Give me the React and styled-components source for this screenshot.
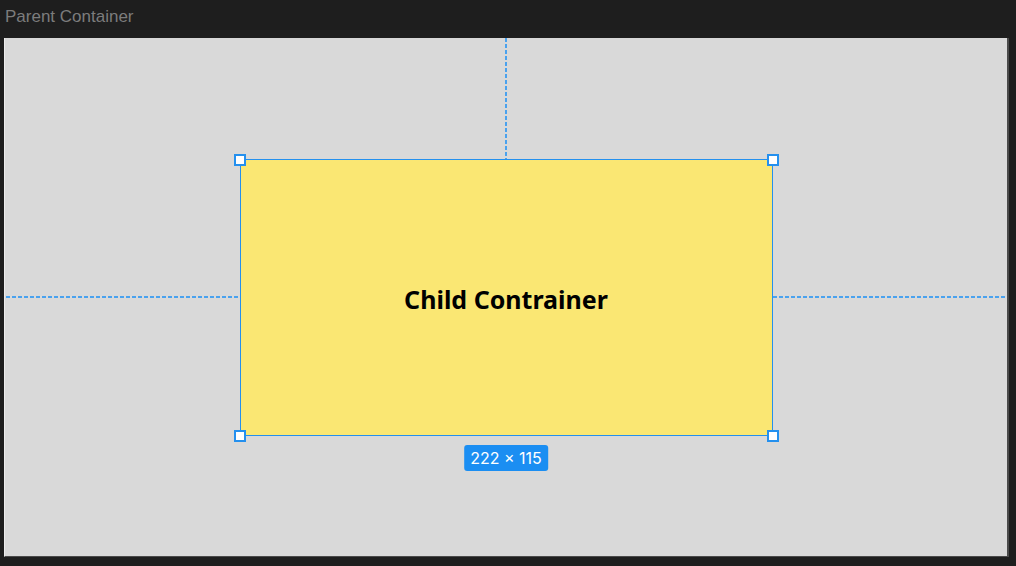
import React from "react";
import styled, { createGlobalStyle } from "styled-components";

const GlobalStyle = createGlobalStyle`
  html, body {
    margin: 0;
    padding: 0;
    background: #1e1e1e;
  }
`;

const Frame = styled.div`
  width: 1016px;
  height: 566px;
  display: flex;
  flex-direction: column;
  box-sizing: border-box;
  padding: 0 7px 9px 4px;
`;

const Title = styled.div`
  height: 38px;
  padding: 5px 0 0 1px;
  box-sizing: border-box;
  font-family: "Liberation Sans", Arial, sans-serif;
  font-size: 17px;
  color: #7c7c7c;
  line-height: 24px;
`;

const Canvas = styled.div`
  flex: 1;
  position: relative;
  background: #d9d9d9;
  border-left: 1px solid #ececec;
  border-right: 2px solid #4a4a4a;
  border-bottom: 1px solid #4a4a4a;
  display: flex;
  align-items: center;
  justify-content: center;
`;

const blue = "#2490ee";
const guideBlue = "#4aa2ee";

const Child = styled.div`
  position: relative;
  width: 533px;
  height: 277px;
  box-sizing: border-box;
  background: #fae773;
  border: 1px solid ${blue};
  display: flex;
  align-items: center;
  justify-content: center;
  padding-top: 3px;
  font-family: "Noto Sans", "Open Sans", sans-serif;
  font-weight: 700;
  font-size: 25px;
  color: #000;
`;

const Guide = styled.div`
  position: absolute;
  ${(p) =>
    p.$vertical
      ? `
    width: 2px;
    height: 121px;
    left: 264px;
    bottom: 100%;
    margin-bottom: 1px;
    background-image: linear-gradient(to bottom, ${guideBlue} 4px, transparent 4px);
    background-size: 2px 6px;
    background-repeat: repeat-y;
  `
      : `
    height: 2px;
    width: 234px;
    top: 136px;
    background-image: linear-gradient(to right, ${guideBlue} 4px, transparent 4px);
    background-size: 6px 2px;
    background-repeat: repeat-x;
    ${p.$side}: 100%;
    margin-${p.$side}: 1px;
  `}
`;

const Handle = styled.span`
  position: absolute;
  width: 12px;
  height: 12px;
  box-sizing: border-box;
  background: #fff;
  border: 2px solid ${blue};
  ${(p) => (p.$top ? "top: -6px;" : "bottom: -7px;")}
  ${(p) => (p.$left ? "left: -7px;" : "right: -7px;")}
`;

const SizeBadge = styled.div`
  position: absolute;
  top: calc(100% + 10px);
  left: 50%;
  transform: translateX(-50%);
  height: 26px;
  padding: 0 6px;
  border-radius: 3px;
  background: #1b8ef2;
  color: #fff;
  font-family: "Inter", "Liberation Sans", sans-serif;
  font-weight: 400;
  font-size: 16px;
  line-height: 26px;
  white-space: nowrap;
`;

export default function App() {
  return (
    <>
      <GlobalStyle />
      <Frame>
        <Title>Parent Container</Title>
        <Canvas>
          <Child>
            <Guide $vertical />
            <Guide $side="right" />
            <Guide $side="left" />
            Child Contrainer
            <Handle $top $left />
            <Handle $top />
            <Handle $left />
            <Handle />
            <SizeBadge>222 × 115</SizeBadge>
          </Child>
        </Canvas>
      </Frame>
    </>
  );
}
